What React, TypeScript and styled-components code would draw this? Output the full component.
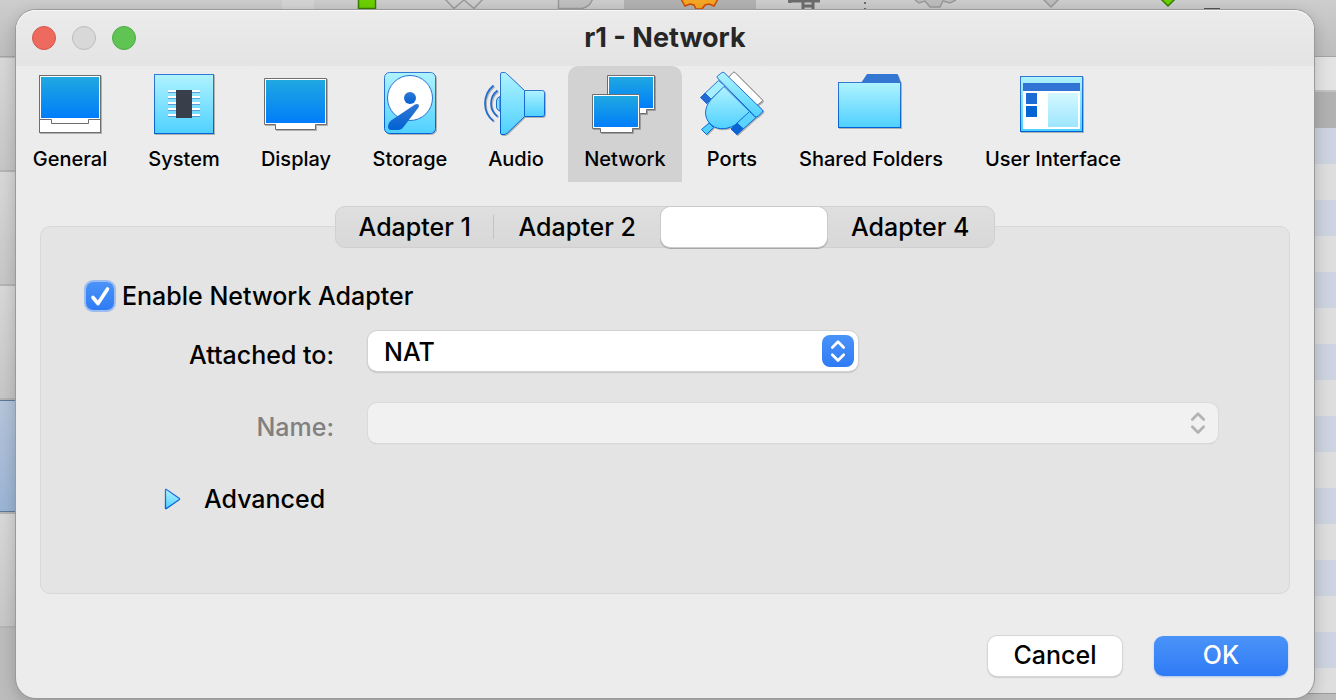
import React, { useState } from "react";
import styled, { createGlobalStyle, css } from "styled-components";

const GlobalStyle = createGlobalStyle`
  *, *::before, *::after { box-sizing: border-box; }
  body { margin: 0; background: #c9c9c9; }
  body, button, input, select {
    font-family: Inter, "Liberation Sans", sans-serif;
    font-weight: 500;
    color: #000;
  }
`;

/* ---------- Manager window behind the dialog ---------- */

const Desktop = styled.div`
  display: grid;
  min-height: 100vh;
  overflow: hidden;
`;

const Manager = styled.div`
  grid-area: 1 / 1;
  display: flex;
  flex-direction: column;
  background: #bcbcbc;
`;

const ManagerToolbar = styled.div`
  height: 57px;
  flex: none;
  display: flex;
  background: linear-gradient(#cdcdcd, #bdbdbd);
  border-bottom: 1px solid #a4a4a4;
`;

const ManagerBody = styled.div`
  flex: 1;
  display: flex;
  justify-content: space-between;
`;

const MachineList = styled.div`
  width: 314px;
  display: flex;
  flex-direction: column;
  padding-top: 1px;
`;

const MachineRow = styled.div<{ $selected?: boolean }>`
  height: 114px;
  flex: none;
  border-bottom: 2px solid #b4b4b4;
  background: linear-gradient(#d8d8d8, #c6c6c6);
  ${(p) =>
    p.$selected &&
    css`
      background: linear-gradient(#b5c5da, #9bb4d4);
      box-shadow: inset 0 1px 0 #5d7a9c, inset 0 -1px 0 #5d7a9c;
    `}
`;

const SnapshotTable = styled.div`
  width: 314px;
  display: flex;
  flex-direction: column;
`;

const SnapshotTools = styled.div`
  height: 35px;
  background: #e3e3e3;
  border-bottom: 2px solid #c2c2c2;
`;

const SnapshotHead = styled.div`
  height: 36px;
  background: #b1b1b1;
`;

const SnapshotRows = styled.div`
  height: 566px;
  border-bottom: 1px solid #9b9b9b;
  background: repeating-linear-gradient(#cdd3e0 0 36px, #dedede 36px 72px);
`;

/* ---------- Dialog ---------- */

const Dialog = styled.main`
  grid-area: 1 / 1;
  z-index: 1;
  min-width: 0;
  margin: 10px 22px 2px 16px;
  display: flex;
  flex-direction: column;
  border-radius: 20px;
  background: #ececec;
  box-shadow: 0 0 0 1px #9a9a9a, 0 4px 16px rgba(0, 0, 0, 0.22);
`;

const TitleBar = styled.header`
  height: 56px;
  flex: none;
  display: grid;
  grid-template-columns: 1fr auto 1fr;
  align-items: center;
  padding: 0 16px;
  border-radius: 20px 20px 0 0;
  background: linear-gradient(#ebebeb, #e4e4e4);
  box-shadow: inset 0 1px 0 #f8f8f8;
`;

const Lights = styled.div`
  display: flex;
  gap: 16px;
`;

const Light = styled.button<{ $fill: string; $edge: string }>`
  width: 24px;
  height: 24px;
  padding: 0;
  border-radius: 50%;
  border: 1px solid ${(p) => p.$edge};
  background: ${(p) => p.$fill};
`;

const Title = styled.h1`
  margin: 0;
  font-size: 27px;
  line-height: 32px;
  font-weight: 700;
  color: #262626;
`;

const Categories = styled.nav`
  display: flex;
  gap: 8px;
`;

const Category = styled.button<{ $width: number; $active: boolean }>`
  width: ${(p) => p.$width}px;
  height: 116px;
  flex: none;
  display: flex;
  flex-direction: column;
  align-items: center;
  gap: 8px;
  padding: 4px 0 0;
  border: 0;
  border-radius: 10px 10px 0 0;
  background: ${(p) => (p.$active ? "#d2d2d2" : "transparent")};
  font-size: 20px;
  line-height: 26px;
  white-space: nowrap;

  svg {
    width: 68px;
    height: 68px;
    flex: none;
    filter: drop-shadow(1px 1px 0 rgba(0, 0, 0, 0.25));
  }
`;

const Content = styled.section`
  flex: 1;
  display: flex;
  flex-direction: column;
  padding: 24px 24px 0;
`;

const Tabs = styled.div`
  z-index: 1;
  align-self: center;
  display: grid;
  grid-template-columns: 158fr 168fr 166fr 168fr;
  width: 660px;
  max-width: 100%;
  height: 42px;
  margin-bottom: -22px;
  border: 1px solid #d0d0d0;
  border-radius: 10px;
  background: linear-gradient(#dfdfdf, #d8d8d8);
`;

const Tab = styled.button<{ $active: boolean; $divided: boolean }>`
  padding: 0;
  border: 0;
  border-radius: 9px;
  background: ${(p) => (p.$active ? "#fff" : "transparent")};
  color: ${(p) => (p.$active ? "#fff" : "#000")};
  box-shadow: ${(p) => (p.$active ? "0 0 0 1px #cbcbcb, 0 1px 0 1px #a8a8a8" : "none")};
  font-size: 25px;
  line-height: 32px;
  ${(p) =>
    p.$divided &&
    css`
      background: linear-gradient(#c3c3c3, #c3c3c3) right center / 1px 24px no-repeat;
    `}
`;

const Panel = styled.div`
  flex: 1;
  display: flex;
  flex-direction: column;
  align-items: flex-start;
  padding: 52px 71px 24px 43px;
  border: 1px solid #d8d8d8;
  border-radius: 10px;
  background: #e4e4e4;
`;

const EnableLabel = styled.label`
  display: flex;
  align-items: center;
  gap: 6px;
  margin-bottom: 18px;
  font-size: 25px;
  line-height: 34px;
`;

const CheckWrap = styled.span`
  position: relative;
  display: flex;

  svg {
    position: absolute;
    inset: 0;
    pointer-events: none;
  }
`;

const CheckBox = styled.input`
  appearance: none;
  width: 28px;
  height: 28px;
  margin: 2px;
  border-radius: 7px;
  background: #fff;
  box-shadow: 0 0 0 2px #9dbdee;

  &:checked {
    background: linear-gradient(#4a93f8, #2f7bf6);
  }
`;

const Fields = styled.div`
  align-self: stretch;
  display: grid;
  grid-template-columns: 250px 1fr;
  column-gap: 34px;
  row-gap: 32px;
`;

const FieldLabel = styled.label<{ $muted?: boolean }>`
  padding-top: 8px;
  text-align: right;
  font-size: 25px;
  line-height: 32px;
  color: ${(p) => (p.$muted ? "#808080" : "#000")};
`;

const SelectWrap = styled.div<{ $width: string }>`
  position: relative;
  width: ${(p) => p.$width};
  max-width: 100%;
  height: 40px;
`;

const Select = styled.select`
  appearance: none;
  width: 100%;
  height: 40px;
  padding: 2px 48px 0 16px;
  border: 0;
  border-radius: 9px;
  background: #fff;
  box-shadow: 0 0 0 1px #d2d2d2, 0 1px 2px rgba(0, 0, 0, 0.4);
  font-size: 25px;
  line-height: 32px;

  &:disabled {
    background: #f1f1f1;
    opacity: 1;
    box-shadow: 0 0 0 1px #dadada, 0 1px 1px rgba(0, 0, 0, 0.2);
  }
`;

const Arrows = styled.span<{ $disabled?: boolean }>`
  position: absolute;
  top: 4px;
  right: 4px;
  width: 32px;
  height: 32px;
  border-radius: 8px;
  pointer-events: none;
  color: ${(p) => (p.$disabled ? "#b3b3b3" : "#fff")};
  background: ${(p) => (p.$disabled ? "none" : "linear-gradient(#4a93f8, #2f7bf6)")};
`;

const Advanced = styled.button`
  display: flex;
  align-items: center;
  gap: 22px;
  margin: 40px 0 0 80px;
  padding: 0;
  border: 0;
  background: none;
  font-size: 25px;
  line-height: 32px;
`;

const Footer = styled.footer`
  display: flex;
  justify-content: flex-end;
  gap: 32px;
  padding: 42px 26px 22px;
`;

const PushButton = styled.button<{ $primary?: boolean }>`
  width: 134px;
  height: 40px;
  padding: 0 0 2px;
  border: 0;
  border-radius: 9px;
  font-size: 25px;
  line-height: 32px;
  background: #fff;
  box-shadow: 0 0 0 1px #d6d6d6, 0 1px 2px rgba(0, 0, 0, 0.4);
  ${(p) =>
    p.$primary &&
    css`
      color: #fff;
      background: linear-gradient(#4a93f8, #2f7bf6);
      box-shadow: 0 1px 2px rgba(47, 123, 246, 0.35);
    `}
`;

/* ---------- Drawings ---------- */

const GradientStore = styled.svg`
  position: absolute;
  width: 0;
  height: 0;
`;

const Gradients = () => (
  <GradientStore aria-hidden="true">
    <defs>
      <linearGradient id="screen" x1="0" y1="0" x2="0" y2="1">
        <stop offset="0" stopColor="#20a8e0" />
        <stop offset="1" stopColor="#007dfa" />
      </linearGradient>
      <linearGradient id="sky" x1="0" y1="0" x2="0" y2="1">
        <stop offset="0" stopColor="#b0f3ff" />
        <stop offset="1" stopColor="#4fd0ff" />
      </linearGradient>
      <linearGradient id="edge" x1="0" y1="0" x2="0" y2="1">
        <stop offset="0" stopColor="#3377d3" />
        <stop offset="1" stopColor="#0062d4" />
      </linearGradient>
    </defs>
  </GradientStore>
);

const GeneralIcon = () => (
  <svg viewBox="0 0 68 68">
    <rect x="3.5" y="5.5" width="61" height="57" fill="#fff" stroke="#6e6e6e" />
    <rect x="5" y="7" width="58" height="41" fill="url(#screen)" />
    <path d="M3.5 49.5H15.5V53.5H52.5V49.5H64.5" fill="none" stroke="#6e6e6e" />
  </svg>
);

const SystemIcon = () => (
  <svg viewBox="0 0 68 68">
    <rect x="4.5" y="4.5" width="59" height="59" fill="url(#sky)" stroke="url(#edge)" />
    {[20, 26, 32, 38, 44].map((y) => (
      <g key={y}>
        <rect x="18" y={y} width="32" height="2" fill="#fff" />
        <rect x="18" y={y + 2} width="32" height="1" fill="#5b9ed8" />
      </g>
    ))}
    <rect x="26" y="20" width="16" height="28" fill="#383e4a" />
  </svg>
);

const DisplayIcon = () => (
  <svg viewBox="0 0 68 68">
    <path d="M2.5 8.5H64.5V54.5H53.5V59.5H13.5V54.5H2.5Z" fill="#fff" stroke="#6e6e6e" />
    <rect x="4" y="10" width="59" height="43" fill="url(#screen)" />
  </svg>
);

const StorageIcon = () => (
  <svg viewBox="0 0 68 68">
    <rect x="8.5" y="2.5" width="51" height="61" rx="5" fill="url(#sky)" stroke="url(#edge)" />
    <circle cx="34" cy="28" r="22.5" fill="#fff" stroke="#2b72d2" />
    <circle cx="34" cy="28" r="6" fill="url(#edge)" />
    <path
      d="M39 34.5L15 50.5Q12 53 12 56V57.5Q12.5 60 15 60H22Q25.5 60 27.5 57L42.5 37.5Q43.5 35.5 42.5 34.5Q41 33.5 39 34.5Z"
      fill="url(#edge)"
    />
  </svg>
);

const AudioIcon = () => (
  <svg viewBox="0 0 68 68">
    <path d="M18 26.5Q14.5 27.5 14.5 31V37Q14.5 40 18 41Z" fill="#7fe0ff" stroke="#1f6cd3" />
    <path d="M42.5 20.5H60.5Q62.5 20.5 62.5 22.5V44.5Q62.5 46.5 60.5 46.5H42.5Z" fill="url(#sky)" stroke="url(#edge)" />
    <path
      d="M18.5 4Q18.5 2.5 20 2.5H22Q23.5 2.5 24.5 3.5L42.5 20.5V46.5L25.5 63Q23.5 64.5 22 64.5H20Q18.5 64.5 18.5 63Z"
      fill="url(#sky)"
      stroke="url(#edge)"
    />
    <path d="M15.5 20.5Q9 25.5 9 33.5T15.5 46.5M11.5 15.5Q3 22.5 3 33.5T11.5 51" fill="none" stroke="#1f6cd3" strokeWidth="1.7" />
  </svg>
);

const NetworkIcon = () => (
  <svg viewBox="0 0 68 68">
    <path d="M16.5 5.5H63.5V39.5H55.5V43.5H25.5V39.5H16.5Z" fill="#fff" stroke="#6e6e6e" />
    <rect x="18" y="7" width="44" height="31" fill="url(#screen)" />
    <path d="M1.5 24.5H48.5V58.5H41.5V62.5H9.5V58.5H1.5Z" fill="#fff" stroke="#6e6e6e" />
    <rect x="3" y="26" width="44" height="31" fill="url(#screen)" />
  </svg>
);

const PortsIcon = () => (
  <svg viewBox="0 0 68 68" strokeLinejoin="round">
    <path d="M30 8L35 2.5Q36 1.5 37 2.5L64 29.5Q65 30.5 64 31.5L58 36Z" fill="#fff" stroke="#777" />
    <path d="M11 53L3.5 59.5L8.5 64.5L15.5 57.5Z" fill="#4fd0ff" stroke="#0a64d4" />
    <path d="M20.5 10.5L2.5 27.5L8.5 33.5L27 16Z" fill="#a6efff" stroke="#2b72d2" />
    <path d="M2.5 27.5L7 23L13 29L8.5 33.5Z" fill="#1f6cd3" stroke="#1f6cd3" />
    <path d="M51 41L58 47.5L39 64.5L33 59Z" fill="#5bd5ff" stroke="#1167d4" />
    <path d="M39 53L45 58.5L39 64.5L33 59Z" fill="#0a64d4" stroke="#0a64d4" />
    <path d="M26 16.5L13 29.5C5 39 7 48 11.5 53C17 60 28 60.5 37 55L51.5 41.5Z" fill="url(#sky)" stroke="url(#edge)" />
    <path
      d="M19.5 8Q18.5 7 19.5 6L24 2.5Q25 2 26 2.5L64.5 40Q65.5 41 64.5 42L60 46.5Q58.5 47.5 57 46.5Z"
      fill="url(#sky)"
      stroke="url(#edge)"
    />
  </svg>
);

const FolderIcon = () => (
  <svg viewBox="0 0 68 68">
    <path d="M24 13L30 4H60.5L64 13Z" fill="#3377d3" />
    <rect x="1.5" y="12.5" width="62" height="45" fill="url(#sky)" stroke="url(#edge)" />
  </svg>
);

const InterfaceIcon = () => (
  <svg viewBox="0 0 68 68">
    <rect x="1.5" y="6.5" width="62" height="55" fill="url(#sky)" stroke="url(#edge)" />
    <rect x="4" y="13" width="57" height="8" fill="#3075d3" />
    <rect x="4" y="21" width="57" height="38" fill="#fff" />
    <rect x="7" y="23" width="11" height="11" fill="#1d6cd4" />
    <rect x="7" y="36" width="11" height="11" fill="#0564d4" />
    <rect x="29" y="23" width="30" height="34" fill="url(#sky)" opacity="0.55" />
  </svg>
);

const ToolbarArt = () => (
  <svg width="1336" height="56" viewBox="0 0 1336 56" aria-hidden="true">
    <rect x="282" width="32" height="56" fill="#d4d4d4" />
    <rect x="624" width="132" height="56" fill="#b2b2b2" />
    <path d="M358.5 -4V8.5H375.5V-4" fill="#6bd000" stroke="#347f00" strokeWidth="1.5" />
    <path d="M444 -2L454 8.5L464 0L474 8.5L484 -2" fill="none" stroke="#9a9a9a" strokeWidth="1.5" />
    <path d="M558.5 -2V8.5H582Q590 7 593 -2" fill="#c0c0c0" stroke="#9a9a9a" strokeWidth="1.5" />
    <path d="M681 -1L685 6L690 4L694 5L696 9H702L705 5L709 4L714 6L718 -1" fill="#f5a623" stroke="#d04c00" strokeWidth="1.5" />
    <path d="M790 0V3M788 1H820M803 0V10M813 0V10M803 6H813" fill="none" stroke="#6c6c6c" strokeWidth="3" />
    <path d="M864 2H866V4H864ZM864 8H866V10H864Z" fill="#6c6c6c" />
    <path d="M915 0L919 3L925 1L930 7H940L943 1L950 3L956 0" fill="#bdbdbd" stroke="#9a9a9a" strokeWidth="1.5" />
    <path d="M1042 -2L1051 7L1060 -2" fill="#bdbdbd" stroke="#9a9a9a" strokeWidth="1.5" />
    <path d="M1159 -3L1168 6L1177 -3" fill="#6bd000" stroke="#347f00" strokeWidth="1.5" />
    <rect x="1204" y="8" width="16" height="2" fill="#555" />
  </svg>
);

const Chevrons = () => (
  <svg width="32" height="32" viewBox="0 0 32 32" fill="none" stroke="currentColor" strokeWidth="2.7" strokeLinecap="round" strokeLinejoin="round" aria-hidden="true">
    <path d="M10.3 12.5L16 6.7L21.7 12.5M10.3 19.7L16 25.5L21.7 19.7" />
  </svg>
);

const CheckMark = () => (
  <svg width="32" height="32" viewBox="0 0 32 32" fill="none" stroke="#fff" strokeWidth="3.6" strokeLinecap="round" strokeLinejoin="round" aria-hidden="true">
    <path d="M9 17.5L14 23.5L23.5 9" />
  </svg>
);

const Disclosure = () => (
  <svg width="18" height="22" viewBox="0 0 18 22" aria-hidden="true">
    <path d="M1.5 1.5H2.5L15.5 10.5V11.5L2.5 20.5H1.5Z" fill="url(#sky)" stroke="url(#edge)" strokeWidth="1.3" strokeLinejoin="round" />
  </svg>
);

const categories = [
  { name: "General", width: 108, Icon: GeneralIcon },
  { name: "System", width: 104, Icon: SystemIcon },
  { name: "Display", width: 104, Icon: DisplayIcon },
  { name: "Storage", width: 108, Icon: StorageIcon },
  { name: "Audio", width: 88, Icon: AudioIcon },
  { name: "Network", width: 114, Icon: NetworkIcon },
  { name: "Ports", width: 84, Icon: PortsIcon },
  { name: "Shared Folders", width: 178, Icon: FolderIcon },
  { name: "User Interface", width: 170, Icon: InterfaceIcon },
];

const adapters = ["Adapter 1", "Adapter 2", "Adapter 3", "Adapter 4"];

export default function App() {
  const [category, setCategory] = useState("Network");
  const [adapter, setAdapter] = useState(2);
  const [enabled, setEnabled] = useState(true);

  return (
    <Desktop>
      <GlobalStyle />
      <Gradients />
      <Manager aria-hidden="true">
        <ManagerToolbar>
          <ToolbarArt />
        </ManagerToolbar>
        <ManagerBody>
          <MachineList>
            <MachineRow />
            <MachineRow />
            <MachineRow />
            <MachineRow $selected />
            <MachineRow />
          </MachineList>
          <SnapshotTable>
            <SnapshotTools />
            <SnapshotHead />
            <SnapshotRows />
          </SnapshotTable>
        </ManagerBody>
      </Manager>

      <Dialog>
        <TitleBar>
          <Lights>
            <Light $fill="#ee6a5f" $edge="#d4554b" aria-label="Close" />
            <Light $fill="#d8d8d8" $edge="#bdbdbd" aria-label="Minimize" disabled />
            <Light $fill="#5fc454" $edge="#4dab43" aria-label="Zoom" />
          </Lights>
          <Title>r1 - Network</Title>
        </TitleBar>

        <Categories>
          {categories.map(({ name, width, Icon }) => (
            <Category key={name} $width={width} $active={name === category} onClick={() => setCategory(name)}>
              <Icon />
              {name}
            </Category>
          ))}
        </Categories>

        <Content>
          <Tabs role="tablist">
            {adapters.map((name, i) => (
              <Tab
                key={name}
                role="tab"
                aria-label={name}
                aria-selected={i === adapter}
                $active={i === adapter}
                $divided={i !== adapter && i + 1 !== adapter && i < 3}
                onClick={() => setAdapter(i)}
              >
                {i === adapter ? null : name}
              </Tab>
            ))}
          </Tabs>
          <Panel>
            <EnableLabel>
              <CheckWrap>
                <CheckBox type="checkbox" checked={enabled} onChange={() => setEnabled(!enabled)} />
                {enabled && <CheckMark />}
              </CheckWrap>
              Enable Network Adapter
            </EnableLabel>
            <Fields>
              <FieldLabel htmlFor="attached">Attached to:</FieldLabel>
              <SelectWrap $width="490px">
                <Select id="attached" defaultValue="NAT">
                  <option>NAT</option>
                </Select>
                <Arrows>
                  <Chevrons />
                </Arrows>
              </SelectWrap>
              <FieldLabel htmlFor="name" $muted>
                Name:
              </FieldLabel>
              <SelectWrap $width="100%">
                <Select id="name" disabled />
                <Arrows $disabled>
                  <Chevrons />
                </Arrows>
              </SelectWrap>
            </Fields>
            <Advanced aria-expanded="false">
              <Disclosure />
              Advanced
            </Advanced>
          </Panel>
        </Content>

        <Footer>
          <PushButton>Cancel</PushButton>
          <PushButton $primary>OK</PushButton>
        </Footer>
      </Dialog>
    </Desktop>
  );
}
